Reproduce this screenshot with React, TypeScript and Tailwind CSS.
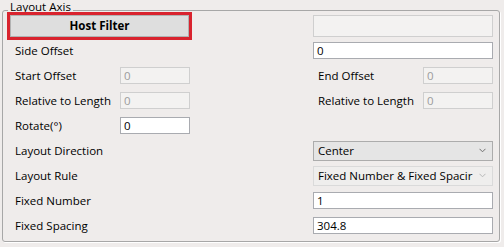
import React from "react";

const font = { fontFamily: '"Open Sans", "Noto Sans", sans-serif' };

const Chevron: React.FC<{ light?: boolean }> = ({ light }) => (
  <svg width="7" height="5" viewBox="0 0 7 5" className="ml-auto mr-[6px] shrink-0">
    <polyline points="0.5,0.8 3.5,3.8 6.5,0.8" fill="none" stroke={light ? "#b8b8b8" : "#6f6f6f"} strokeWidth="1" />
  </svg>
);

const TextBox: React.FC<{ value?: string; disabled?: boolean; className?: string }> = ({ value = "", disabled, className = "" }) => (
  <div
    className={`h-[17px] flex items-center pl-[3px] border text-[11.5px] leading-none ${
      disabled ? "bg-[#f3f2f1] border-[#cfcfcf] text-[#9c9c9c]" : "bg-white border-[#a9abb0] text-black"
    } ${className}`}
  >
    {value}
  </div>
);

const Row: React.FC<{ label: string; children?: React.ReactNode }> = ({ label, children }) => (
  <div className="flex items-center h-[25px] pl-[12px] pr-[6px]">
    <span className="w-[105px] shrink-0 text-[11.5px]">{label}</span>
    {children}
  </div>
);

export default function App() {
  return (
    <div className="w-[504px] h-[247px] bg-[#efeceb] pt-[10px] px-[2px] text-black" style={font}>
      {/* Group box */}
      <div className="relative h-[232px] w-[498px] border border-[#a7a7a7] rounded-[3px] shadow-[1px_1px_0_#ffffff]">
        <span className="absolute -top-[10px] left-[5px] px-[2px] bg-[#efeceb] text-[11.5px] leading-[12px]">
          Layout Axis
        </span>

        {/* Host filter, highlighted in red */}
        <div className="flex items-start h-[27px] pl-[4px] pr-[6px]">
          <div className="relative z-10 mt-[1px] w-[185px] h-[28px] p-[3px] bg-[#d9232e]">
            <button className="block w-full h-full bg-[#dedede] border border-[#b2b2b2] text-[11.5px] font-bold">
              Host Filter
            </button>
          </div>
          <div className="ml-auto mt-[4px] w-[180px] h-[22px] bg-[#f3f2f1] border border-[#cfcfcf]" />
        </div>

        <Row label="Side Offset">
          <TextBox value="0" className="ml-auto w-[180px]" />
        </Row>

        <Row label="Start Offset">
          <TextBox value="0" disabled className="w-[70px]" />
          <div className="ml-auto w-[180px] flex items-center">
            <span className="w-[110px] pl-[5px] text-[11.5px]">End Offset</span>
            <TextBox value="0" disabled className="w-[70px]" />
          </div>
        </Row>

        <Row label="Relative to Length">
          <TextBox value="0" disabled className="w-[70px]" />
          <div className="ml-auto w-[180px] flex items-center">
            <span className="w-[110px] pl-[5px] text-[11.5px]">Relative to Length</span>
            <TextBox value="0" disabled className="w-[70px]" />
          </div>
        </Row>

        <Row label="Rotate(°)">
          <TextBox value="0" className="w-[70px]" />
        </Row>

        <Row label="Layout Direction">
          <div className="ml-auto w-[180px] h-[20px] flex items-center pl-[4px] bg-[#e5e5e5] border border-[#acacac] text-[11.5px]">
            Center
            <Chevron />
          </div>
        </Row>

        <Row label="Layout Rule">
          <div className="ml-auto w-[180px] h-[20px] flex items-center pl-[4px] bg-[#efeeed] border border-[#dadada] text-[11.5px] whitespace-nowrap">
            <span className="w-[156px] overflow-hidden">Fixed Number &amp; Fixed Spacir</span>
            <Chevron light />
          </div>
        </Row>

        <Row label="Fixed Number">
          <TextBox value="1" className="ml-auto w-[180px]" />
        </Row>

        <Row label="Fixed Spacing">
          <TextBox value="304.8" className="ml-auto w-[180px]" />
        </Row>
      </div>
    </div>
  );
}
